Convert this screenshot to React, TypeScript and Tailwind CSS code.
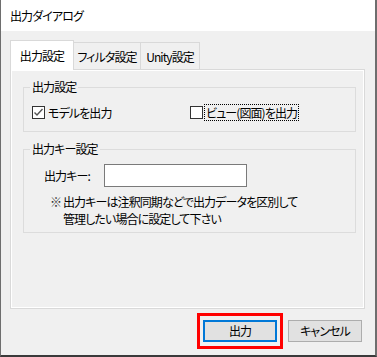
import React from "react";

const font =
  "font-['Noto_Sans_CJK_JP','Noto_Sans',sans-serif] [font-feature-settings:'palt'] text-[12px] tracking-[-0.9px] text-black";

function CheckBox({ checked }: { checked?: boolean }) {
  return (
    <svg width="13" height="13" viewBox="0 0 13 13" className="shrink-0">
      <rect x="0.5" y="0.5" width="12" height="12" fill="#ffffff" stroke="#333333" />
      {checked && (
        <polyline
          points="2.5,6.5 5,9 10.5,3"
          fill="none"
          stroke="#555555"
          strokeWidth="1.4"
        />
      )}
    </svg>
  );
}

export default function App() {
  return (
    <div
      className={`${font} w-[377px] h-[357px] bg-[#f0f0f0] border-l border-l-[#6e6e6e] border-r-2 border-r-[#6e6e6e] border-b-2 border-b-[#3a3a3a] flex flex-col overflow-hidden`}
    >
      {/* Title bar */}
      <div className="h-[31px] bg-white flex items-center pl-[9px] leading-none shrink-0">
        出力ダイアログ
      </div>

      {/* Tabs */}
      <div className="mt-[9px] ml-[9px] mr-[10px] flex items-end h-[29px] shrink-0">
        <div className="relative z-10 -mb-px h-[30px] w-[64px] bg-white border-x border-t border-[#d9d9d9] flex items-center justify-center leading-none">
          出力設定
        </div>
        <div className="-ml-px h-[27px] w-[68px] bg-[#f0f0f0] border-x border-t border-[#d9d9d9] flex items-center justify-center pt-[2px] leading-none">
          フィルタ設定
        </div>
        <div className="-ml-px h-[27px] w-[60px] bg-[#f0f0f0] border-x border-t border-[#d9d9d9] flex items-center justify-center pt-[2px] leading-none">
          Unity設定
        </div>
      </div>

      {/* Tab pane */}
      <div className="ml-[9px] mr-[10px] h-[240px] border border-[#d9d9d9] shrink-0">
        <div className="h-full border border-white flex flex-col">
          {/* Group 1 */}
          <fieldset className="mt-[8px] ml-[11px] mr-[7px] border border-[#dcdcdc] pb-[10px]">
            <legend className="ml-[6px] px-[2px] leading-[16px]">出力設定</legend>
            <div className="mt-[9px] h-[17px] flex items-center pl-[8px]">
              <div className="w-[158px] flex items-center">
                <CheckBox checked />
                <span className="ml-[3px] leading-none">モデルを出力</span>
              </div>
              <div className="flex items-center">
                <CheckBox />
                <span className="ml-[1px] h-[17px] border border-dotted border-black px-[1px] flex items-center leading-none">
                  ビュー(図面)を出力
                </span>
              </div>
            </div>
          </fieldset>

          {/* Group 2 */}
          <fieldset className="mt-[9px] ml-[11px] mr-[7px] border border-[#dcdcdc] pb-[5px]">
            <legend className="ml-[6px] px-[2px] leading-[16px]">出力キー設定</legend>
            <div className="mt-[7px] flex items-center pl-[20px]">
              <span className="w-[60px] leading-none">出力キー:</span>
              <div className="w-[143px] h-[23px] bg-white border border-[#7a7a7a]" />
            </div>
            <div className="mt-[6px] pl-[26px] flex leading-[17px]">
              <span className="w-[13px] shrink-0 text-[#333333]">※</span>
              <div>
                <div>出力キーは注釈同期などで出力データを区別して</div>
                <div>管理したい場合に設定して下さい</div>
              </div>
            </div>
          </fieldset>
        </div>
      </div>

      {/* Buttons */}
      <div className="mt-[4px] mr-[13px] flex items-center justify-end gap-[5px]">
        <div className="border-[3px] border-[#ff0000] px-[3px] py-[4px]">
          <button className="w-[74px] h-[22px] bg-[#e1e1e1] border-2 border-[#0078d7] flex items-center justify-center leading-none">
            出力
          </button>
        </div>
        <button className="w-[74px] h-[22px] bg-[#e1e1e1] border border-[#adadad] flex items-center justify-center leading-none">
          キャンセル
        </button>
      </div>
    </div>
  );
}
